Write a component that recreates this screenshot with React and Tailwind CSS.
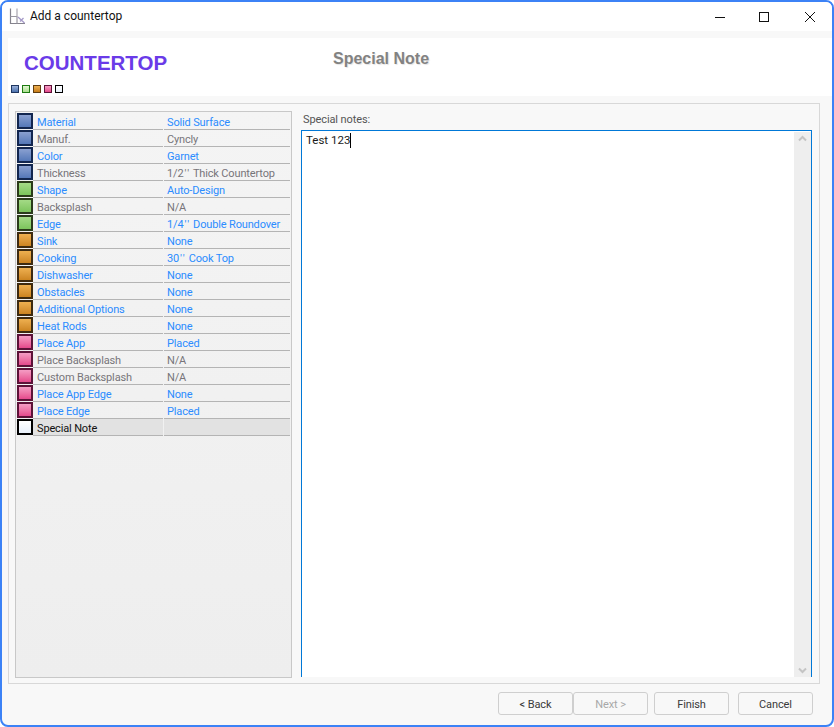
const groups = {
  blue: { sw: "border-[#12264f]", fill: "from-[#8aa0d0] to-[#5578b8]", mini: "border-[#1f3660] from-[#9ab0d8] to-[#4c72ae]" },
  green: { sw: "border-[#2a3a1a]", fill: "from-[#a4da86] to-[#7cc45c]", mini: "border-[#1d7a12] from-[#e2f5d2] to-[#a8de8c]" },
  orange: { sw: "border-[#3d2a10]", fill: "from-[#eeb050] to-[#cc8420]", mini: "border-[#5f3d10] from-[#eeb050] to-[#c67c16]" },
  pink: { sw: "border-[#5c1238]", fill: "from-[#f49cc4] to-[#e4488c]", mini: "border-[#5c1238] from-[#f49cc4] to-[#e4488c]" },
  white: { sw: "border-[#000000]", fill: "from-[#ffffff] to-[#e8f0fa]", mini: "border-[#000000] from-[#ffffff] to-[#e8f0fa]" },
};

const rows = [
  ["blue", "Material", "Solid Surface", 1],
  ["blue", "Manuf.", "Cyncly", 0],
  ["blue", "Color", "Garnet", 1],
  ["blue", "Thickness", "1/2'' Thick Countertop", 0],
  ["green", "Shape", "Auto-Design", 1],
  ["green", "Backsplash", "N/A", 0],
  ["green", "Edge", "1/4'' Double Roundover", 1],
  ["orange", "Sink", "None", 1],
  ["orange", "Cooking", "30'' Cook Top", 1],
  ["orange", "Dishwasher", "None", 1],
  ["orange", "Obstacles", "None", 1],
  ["orange", "Additional Options", "None", 1],
  ["orange", "Heat Rods", "None", 1],
  ["pink", "Place App", "Placed", 1],
  ["pink", "Place Backsplash", "N/A", 0],
  ["pink", "Custom Backsplash", "N/A", 0],
  ["pink", "Place App Edge", "None", 1],
  ["pink", "Place Edge", "Placed", 1],
  ["white", "Special Note", "", 2],
];

function Value({ text }) {
  const parts = text.split("''");
  if (parts.length < 2) return text;
  return (
    <>
      {parts[0]}
      <span className="tracking-[1.4px] ml-[1px]">''</span>
      {parts[1]}
    </>
  );
}

function Row({ group, name, value, kind }) {
  const g = groups[group];
  const color = kind === 1 ? "text-[#2b8cff]" : kind === 2 ? "text-[#111111]" : "text-[#77757a]";
  const bg = kind === 2 ? "bg-[#e2e2e2]" : "";
  const text = "text-[11px] tracking-[-0.15px] leading-[19px] whitespace-nowrap";
  return (
    <div className="flex h-[17px]">
      <div className={`w-[16px] h-[16px] shrink-0 border-2 ${g.sw} bg-gradient-to-b ${g.fill}`} />
      <div className={`w-[130px] h-[17px] border-b border-[#b4b4b4] pl-[4px] ${text} ${color} ${bg}`}>{name}</div>
      <div className={`w-[126px] h-[17px] ml-[1px] border-b border-[#b4b4b4] pl-[3px] ${text} ${color} ${bg}`}>
        <Value text={value} />
      </div>
    </div>
  );
}

function Btn({ children, off, className = "" }) {
  return (
    <div className={`w-[75px] h-[23px] rounded-[3px] border border-[#cfcfcf] bg-[#f8f8f8] flex items-center justify-center pt-[3px] text-[11px] tracking-[-0.1px] ${off ? "text-[#a8a8a8]" : "text-[#3a3a3a]"} ${className}`}>
      {children}
    </div>
  );
}

export default function App() {
  return (
    <div className="w-[834px] h-[727px] bg-white overflow-hidden" style={{ fontFamily: 'Roboto, "Liberation Sans", sans-serif' }}>
      <div className="w-full h-full border-2 border-[#3c82f6] rounded-[8px] bg-[#f8f8f8] overflow-hidden flex flex-col">
        {/* title bar */}
        <div className="h-[29px] shrink-0 bg-white flex items-center">
          <svg width="18" height="18" viewBox="0 0 18 18" className="ml-[7px] mt-[1px]" fill="none">
            <path d="M1.5 0.5V15.5H16" stroke="#85838d" strokeWidth="1.2" />
            <path d="M1.5 8.5H8V15.5" stroke="#9a98a2" strokeWidth="1.2" />
            <path d="M8 0.5V8.5" stroke="#a8a6b0" strokeWidth="1.2" />
            <path d="M9 9L15.5 15M14.5 10L11 13.5" stroke="#a59ac8" strokeWidth="1.3" />
          </svg>
          <span className="ml-[3px] text-[12px] text-[#111111] mt-[-1px]">Add a countertop</span>
          <div className="ml-auto flex items-center h-full">
            <svg width="12" height="12" viewBox="0 0 12 12" className="mr-[32px]"><path d="M1 6.5H11" stroke="#111" strokeWidth="1" /></svg>
            <svg width="12" height="12" viewBox="0 0 12 12" className="mr-[34px]"><rect x="1.5" y="1.5" width="9" height="9" fill="none" stroke="#111" strokeWidth="1" /></svg>
            <svg width="12" height="12" viewBox="0 0 12 12" className="mr-[16px]"><path d="M1 1L11 11M11 1L1 11" stroke="#111" strokeWidth="1" /></svg>
          </div>
        </div>
        <div className="h-[7px] shrink-0" />
        {/* header */}
        <div className="h-[58px] shrink-0 ml-[6px] bg-white relative flex flex-col">
          <div className="flex h-[47px]">
            <div className="w-[325px] pl-[16px] pt-[11px] text-[20.5px] leading-[28px] font-bold text-[#6a3be8]" style={{ fontFamily: '"Liberation Sans", sans-serif' }}>COUNTERTOP</div>
            <div className="pt-[11px] text-[16px] leading-[20px] font-bold text-[#828282] [text-shadow:1px_1px_1px_#e4e4e4]" style={{ fontFamily: '"Liberation Sans", sans-serif' }}>Special Note</div>
          </div>
          <div className="flex gap-[3px] pl-[3px]">
            {["blue", "green", "orange", "pink", "white"].map((k) => (
              <div key={k} className={`w-[8px] h-[8px] border bg-gradient-to-b ${groups[k].mini}`} />
            ))}
          </div>
        </div>
        {/* group */}
        <div className="mt-[7px] ml-[6px] w-[812px] h-[581px] shrink-0 border border-[#d8d8d8] flex">
          {/* list panel */}
          <div className="ml-[6px] mt-[7px] w-[277px] h-[567px] shrink-0 border border-[#c8c8c8] pl-[1px] pt-[1px] bg-gradient-to-b from-[#f4f4f4] to-[#eeeeee]">
            {rows.map((r) => (
              <Row key={r[1]} group={r[0]} name={r[1]} value={r[2]} kind={r[3]} />
            ))}
          </div>
          {/* note panel */}
          <div className="ml-[9px] flex-1 flex flex-col">
            <div className="h-[26px] pl-[2px] pt-[8px] text-[11px] tracking-[-0.1px] leading-[16px] text-[#555555]">Special notes:</div>
            <div className="w-[511px] h-[547px] bg-white border-x border-t border-[#0078d7] flex">
              <div className="flex-1 pl-[4px] pt-[1px] text-[11.5px] leading-[17px] text-[#1a1a1a] flex items-start">
                <span>Test 123</span>
                <span className="inline-block w-px h-[15px] bg-black mt-[1px]" />
              </div>
              <div className="w-[17px] mt-[1px] bg-[#eeeeee] flex flex-col justify-between items-center py-[3px]">
                <svg width="9" height="7" viewBox="0 0 9 7" fill="none"><path d="M1 5.5L4.5 2L8 5.5" stroke="#c4c4c4" strokeWidth="2" /></svg>
                <svg width="9" height="7" viewBox="0 0 9 7" fill="none"><path d="M1 1.5L4.5 5L8 1.5" stroke="#c4c4c4" strokeWidth="2" /></svg>
              </div>
            </div>
          </div>
        </div>
        {/* footer */}
        <div className="flex mt-[8px] ml-[496px]">
          <Btn>&lt; Back</Btn>
          <Btn off>Next &gt;</Btn>
          <Btn className="ml-[6px]">Finish</Btn>
          <Btn className="ml-[9px]">Cancel</Btn>
        </div>
      </div>
    </div>
  );
}
